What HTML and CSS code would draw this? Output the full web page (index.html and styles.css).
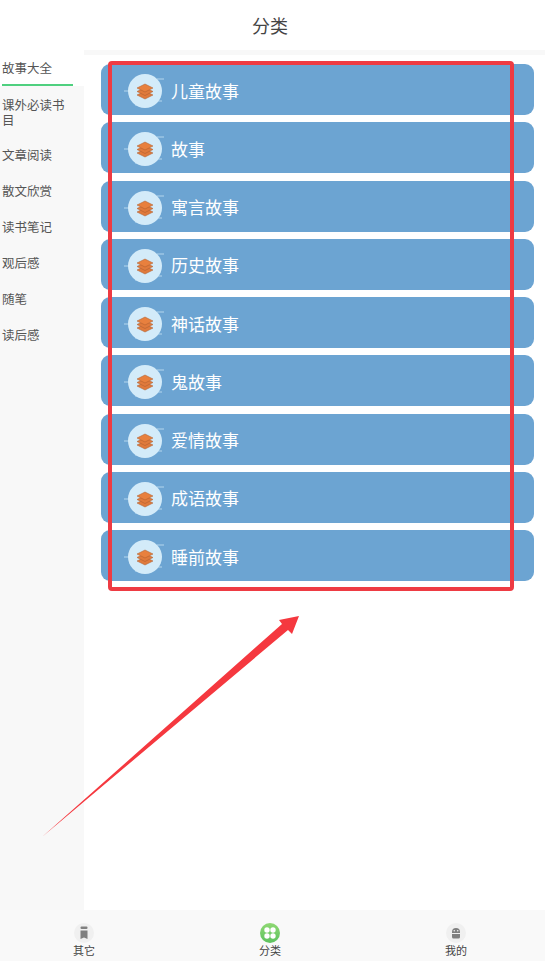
FILE: index.html
```html
<!DOCTYPE html>
<html lang="zh">
<head>
    <meta charset="UTF-8">
    <meta name="viewport" content="width=device-width, initial-scale=1.0">
    <title>分类</title>
    <link rel="stylesheet" href="styles.css">
</head>
<body>
    <div class="pagina">
        <header class="cabecera">分类</header>

        <div class="cuerpo">
            <nav class="lateral">
                <div class="lateral-item activo"><span>故事大全</span></div>
                <div class="lateral-item doble"><span>课外必读书目</span></div>
                <div class="lateral-item"><span>文章阅读</span></div>
                <div class="lateral-item"><span>散文欣赏</span></div>
                <div class="lateral-item"><span>读书笔记</span></div>
                <div class="lateral-item"><span>观后感</span></div>
                <div class="lateral-item"><span>随笔</span></div>
                <div class="lateral-item"><span>读后感</span></div>
            </nav>

            <main class="contenido">
                <div class="tarjeta"><svg class="icono" viewBox="0 0 44 34"><use href="#capas"/></svg><span>儿童故事</span></div>
                <div class="tarjeta"><svg class="icono" viewBox="0 0 44 34"><use href="#capas"/></svg><span>故事</span></div>
                <div class="tarjeta"><svg class="icono" viewBox="0 0 44 34"><use href="#capas"/></svg><span>寓言故事</span></div>
                <div class="tarjeta"><svg class="icono" viewBox="0 0 44 34"><use href="#capas"/></svg><span>历史故事</span></div>
                <div class="tarjeta"><svg class="icono" viewBox="0 0 44 34"><use href="#capas"/></svg><span>神话故事</span></div>
                <div class="tarjeta"><svg class="icono" viewBox="0 0 44 34"><use href="#capas"/></svg><span>鬼故事</span></div>
                <div class="tarjeta"><svg class="icono" viewBox="0 0 44 34"><use href="#capas"/></svg><span>爱情故事</span></div>
                <div class="tarjeta"><svg class="icono" viewBox="0 0 44 34"><use href="#capas"/></svg><span>成语故事</span></div>
                <div class="tarjeta"><svg class="icono" viewBox="0 0 44 34"><use href="#capas"/></svg><span>睡前故事</span></div>
            </main>
        </div>

        <footer class="pie">
            <div class="pie-item">
                <svg class="pie-icono" viewBox="0 0 20 20">
                    <circle cx="10" cy="10" r="10" fill="#f0f0f0"/>
                    <rect x="6.5" y="3.5" width="7" height="2.5" rx="1" fill="#808080"/>
                    <path d="M6.5 7.5h7v8.5l-3.5-1.4L6.5 16z" fill="#808080"/>
                </svg>
                <span>其它</span>
            </div>
            <div class="pie-item">
                <svg class="pie-icono" viewBox="0 0 20 20">
                    <defs>
                        <linearGradient id="verde" x1="0" y1="0" x2="0" y2="1">
                            <stop offset="0" stop-color="#8fd873"/>
                            <stop offset="1" stop-color="#5cc25e"/>
                        </linearGradient>
                    </defs>
                    <circle cx="10" cy="10" r="10" fill="url(#verde)"/>
                    <circle cx="7" cy="7" r="2.7" fill="#fff"/>
                    <circle cx="13" cy="7" r="2.7" fill="#fff"/>
                    <circle cx="7" cy="13" r="2.7" fill="#fff"/>
                    <circle cx="13" cy="13" r="2.7" fill="#fff"/>
                </svg>
                <span>分类</span>
            </div>
            <div class="pie-item">
                <svg class="pie-icono" viewBox="0 0 20 20">
                    <circle cx="10" cy="10" r="10" fill="#f0f0f0"/>
                    <path d="M6 9a4 4 0 0 1 8 0v1H6zM6 11h8v3a1.5 1.5 0 0 1-1.5 1.5h-5A1.5 1.5 0 0 1 6 14z" fill="#808080"/>
                    <circle cx="8.3" cy="7.8" r=".8" fill="#f0f0f0"/>
                    <circle cx="11.7" cy="7.8" r=".8" fill="#f0f0f0"/>
                </svg>
                <span>我的</span>
            </div>
        </footer>

        <div class="marco"></div>

        <svg class="flecha" viewBox="0 0 545 961">
            <path d="M42 837L282 624L279 620L299 616L292 634L288 630Z" fill="#f5383f"/>
        </svg>
    </div>

    <!-- icono compartido de las tarjetas -->
    <svg class="oculto">
        <symbol id="capas" viewBox="0 0 44 34">
            <path d="M1 17h8M34 5h7M33 27h6M12 31h18" stroke="#d4ecf9" stroke-width="1" opacity=".7"/>
            <circle cx="22" cy="17" r="17" fill="#d3ebf9"/>
            <path d="M22 17l8 4-8 4-8-4z" fill="#e07a3c" stroke="#a85a2c" stroke-width=".5"/>
            <path d="M22 13.5l8 4-8 4-8-4z" fill="#e07a3c" stroke="#a85a2c" stroke-width=".5"/>
            <path d="M22 10l8 4-8 4-8-4z" fill="#e8803e" stroke="#a85a2c" stroke-width=".5"/>
        </symbol>
    </svg>
</body>
</html>
```

FILE: styles.css
```css
body {
    margin: 0;
    font-family: "Noto Sans CJK SC", "Noto Sans", sans-serif;
    background-color: #fff;
}

.pagina {
    position: relative;
    display: flex;
    flex-direction: column;
    height: 961px;
    overflow: hidden;
}

.cabecera {
    height: 50px;
    line-height: 50px;
    padding-right: 5px;
    text-align: center;
    font-size: 18px;
    color: #444;
}

.cuerpo {
    flex: 1;
    display: flex;
    min-height: 0;
}

.lateral {
    width: 84px;
    background-color: #f8f8f8;
}

.lateral-item {
    height: 36px;
    line-height: 36px;
    padding-left: 2px;
    font-size: 12.5px;
    color: #555;
}

.lateral-item.activo {
    height: 36px;
    background-color: #fff;
    position: relative;
}

.lateral-item.activo::after {
    content: "";
    position: absolute;
    left: 2px;
    bottom: 0;
    width: 71px;
    height: 2px;
    background-color: #4fd07f;
}

.lateral-item.doble {
    height: 51px;
    line-height: 15px;
    padding: 11px 10px 0 2px;
    box-sizing: border-box;
}

.contenido {
    flex: 1;
    display: flex;
    flex-direction: column;
    gap: 7.25px;
    padding: 9px 11px 0 17px;
    border-top: 5px solid #f8f8f8;
}

.tarjeta {
    display: flex;
    align-items: center;
    height: 51px;
    flex-shrink: 0;
    box-sizing: border-box;
    padding: 3px 0 0 22px;
    border-radius: 9px;
    background-color: #6ca4d2;
    color: #fff;
    font-size: 17px;
}

.tarjeta span {
    margin-bottom: 2px;
}

.icono {
    width: 44px;
    height: 34px;
    margin-right: 4px;
}

.pie {
    display: flex;
    justify-content: center;
    height: 51px;
    padding-right: 5px;
    background-color: #f9f9f9;
}

.pie-item {
    flex: 0 0 186px;
    display: flex;
    flex-direction: column;
    align-items: center;
    padding-top: 13px;
    box-sizing: border-box;
    font-size: 11px;
    line-height: 15px;
    color: #444;
}

.pie-icono {
    width: 20px;
    height: 20px;
}

.marco {
    position: absolute;
    left: 108px;
    top: 61px;
    width: 406px;
    height: 530px;
    box-sizing: border-box;
    border: 4px solid #ee3b43;
    border-radius: 4px;
}

.flecha {
    position: absolute;
    left: 0;
    top: 0;
    width: 545px;
    height: 961px;
}

.oculto {
    position: absolute;
    width: 0;
    height: 0;
}
```
